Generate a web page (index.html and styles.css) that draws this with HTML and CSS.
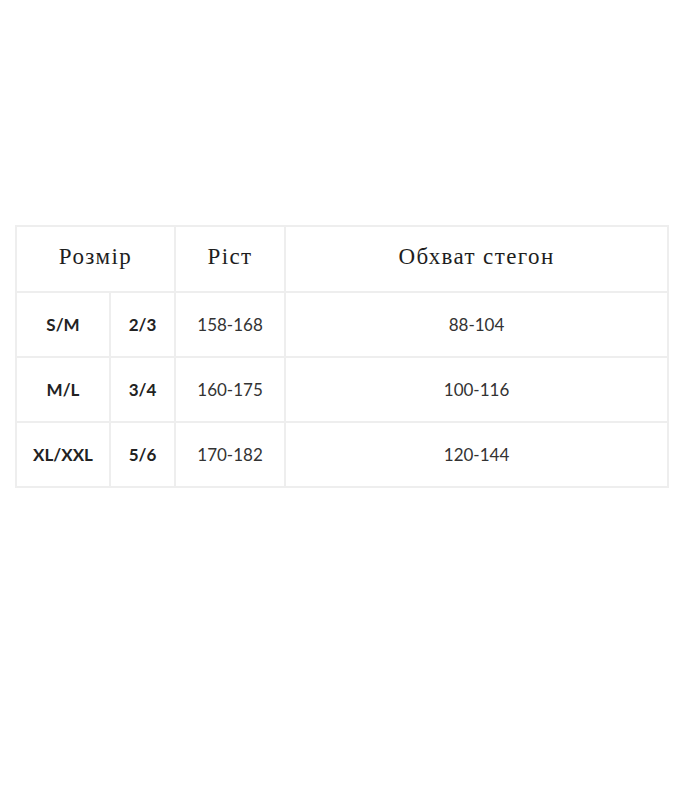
FILE: index.html
```html
<!DOCTYPE html>
<html lang="uk">
<head>
<meta charset="utf-8">
<title>Розмірна сітка</title>
<link rel="stylesheet" href="styles.css">
</head>
<body>
<main class="page">
  <table class="size-table">
    <colgroup>
      <col class="c1"><col class="c2"><col class="c3"><col class="c4">
    </colgroup>
    <thead>
      <tr>
        <th colspan="2">Розмір</th>
        <th>Ріст</th>
        <th>Обхват стегон</th>
      </tr>
    </thead>
    <tbody>
      <tr><td class="b">S/M</td><td class="b">2/3</td><td>158-168</td><td>88-104</td></tr>
      <tr><td class="b">M/L</td><td class="b">3/4</td><td>160-175</td><td>100-116</td></tr>
      <tr><td class="b">XL/XXL</td><td class="b">5/6</td><td>170-182</td><td>120-144</td></tr>
    </tbody>
  </table>
</main>
</body>
</html>
```
FILE: styles.css
```css
html, body {
  margin: 0;
  padding: 0;
  background: #fff;
}
.page {
  padding: 225px 0 0 15px;
}
.size-table {
  border-collapse: collapse;
  table-layout: fixed;
  width: 654px;
  border: 2px solid #eeeeee;
}
.c1 { width: 94px; }
.c2 { width: 65px; }
.c3 { width: 110px; }
.c4 { width: 383px; }
.size-table th,
.size-table td {
  border: 2px solid #eeeeee;
  text-align: center;
  vertical-align: middle;
  padding: 0;
}
.size-table th {
  height: 60px;
  padding-bottom: 4px;
  font-family: "Liberation Serif", "Times New Roman", serif;
  font-weight: normal;
  font-size: 23px;
  letter-spacing: 1.4px;
  color: #1e1e1e;
}
.size-table td {
  height: 63px;
  font-family: Lato, "Liberation Sans", sans-serif;
  font-size: 17px;
  color: #333;
}
.size-table td.b {
  font-weight: bold;
  color: #222;
}
```
